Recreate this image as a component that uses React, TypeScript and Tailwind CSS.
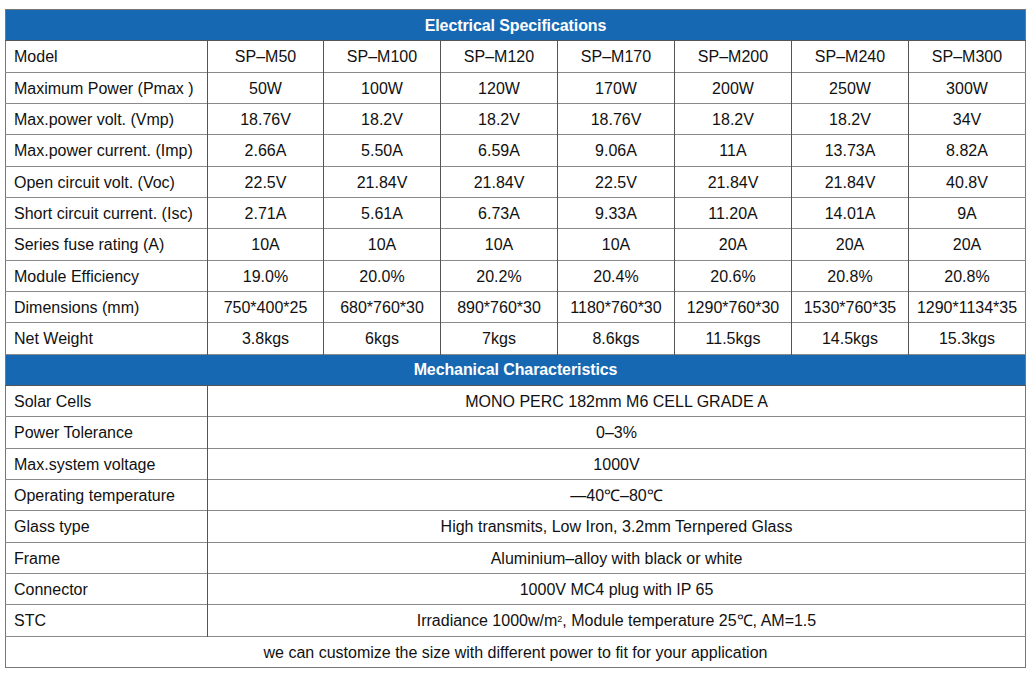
const models = ['SP-M50', 'SP-M100', 'SP-M120', 'SP-M170', 'SP-M200', 'SP-M240', 'SP-M300'];

const electrical: [string, string[]][] = [
  ['Maximum Power (Pmax )', ['50W', '100W', '120W', '170W', '200W', '250W', '300W']],
  ['Max.power volt. (Vmp)', ['18.76V', '18.2V', '18.2V', '18.76V', '18.2V', '18.2V', '34V']],
  ['Max.power current. (Imp)', ['2.66A', '5.50A', '6.59A', '9.06A', '11A', '13.73A', '8.82A']],
  ['Open circuit volt. (Voc)', ['22.5V', '21.84V', '21.84V', '22.5V', '21.84V', '21.84V', '40.8V']],
  ['Short circuit current. (Isc)', ['2.71A', '5.61A', '6.73A', '9.33A', '11.20A', '14.01A', '9A']],
  ['Series fuse rating (A)', ['10A', '10A', '10A', '10A', '20A', '20A', '20A']],
  ['Module Efficiency', ['19.0%', '20.0%', '20.2%', '20.4%', '20.6%', '20.8%', '20.8%']],
  ['Dimensions (mm)', ['750*400*25', '680*760*30', '890*760*30', '1180*760*30', '1290*760*30', '1530*760*35', '1290*1134*35']],
  ['Net Weight', ['3.8kgs', '6kgs', '7kgs', '8.6kgs', '11.5kgs', '14.5kgs', '15.3kgs']],
];

const mechanical: [string, React.ReactNode][] = [
  ['Solar Cells', 'MONO PERC 182mm M6 CELL GRADE A'],
  ['Power Tolerance', '0\u20133%'],
  ['Max.system voltage', '1000V'],
  ['Operating temperature', '\u201440\u2103\u201380\u2103'],
  ['Glass type', 'High transmits, Low Iron, 3.2mm Ternpered Glass'],
  ['Frame', 'Aluminium\u2013alloy with black or white'],
  ['Connector', '1000V MC4 plug with IP 65'],
  [
    'STC',
    <>
      Irradiance 1000w/m<sup className="text-[9px]">2</sup>
      {', Module temperature 25\u2103, AM=1.5'}
    </>,
  ],
];

const row = 'h-[31.33px] border-b border-[#8a8a8a]';
const label = 'pl-[8px] pt-[2px] text-left border-r border-[#555]';
const cell = 'pt-[2px] text-center border-r border-[#555] last:border-r-0';

function Band({ title }: { title: string }) {
  return (
    <tr className="h-[31.33px] bg-[#1668b2] border-b border-[#555]">
      <td colSpan={8} className="pt-[1px] text-center text-white font-bold text-[16px] tracking-[-0.1px]">
        {title}
      </td>
    </tr>
  );
}

export default function App() {
  return (
    <div className="w-[1036px] h-[675px] bg-white pt-[9px] pl-[5px] font-['Liberation_Sans',Arial,sans-serif] text-[16px] text-[#111]">
      <table className="w-[1021px] border-collapse table-fixed border border-[#777]">
        <colgroup>
          <col className="w-[202px]" />
          <col className="w-[116px]" />
          <col className="w-[117px]" />
          <col className="w-[117px]" />
          <col className="w-[117px]" />
          <col className="w-[117px]" />
          <col className="w-[117px]" />
          <col />
        </colgroup>
        <tbody>
          <Band title="Electrical Specifications" />
          <tr className={row}>
            <td className={label}>Model</td>
            {models.map((m) => (
              <td key={m} className={cell}>
                {m.replace('-', '\u2013')}
              </td>
            ))}
          </tr>
          {electrical.map(([name, vals]) => (
            <tr key={name} className={row}>
              <td className={label}>{name}</td>
              {vals.map((v, i) => (
                <td key={i} className={cell}>
                  {v}
                </td>
              ))}
            </tr>
          ))}
          <Band title="Mechanical Characteristics" />
          {mechanical.map(([name, val]) => (
            <tr key={name} className={row}>
              <td className={label}>{name}</td>
              <td colSpan={7} className="pt-[2px] text-center">
                {val}
              </td>
            </tr>
          ))}
          <tr className="h-[31.33px]">
            <td colSpan={8} className="pt-[2px] text-center">
              we can customize the size with different power to fit for your application
            </td>
          </tr>
        </tbody>
      </table>
    </div>
  );
}
